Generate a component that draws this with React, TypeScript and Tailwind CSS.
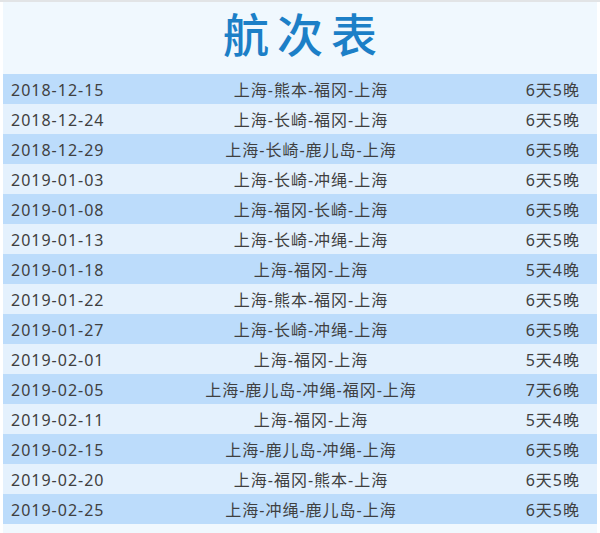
import React from "react";

const rows: [string, string, string][] = [
  ["2018-12-15", "上海-熊本-福冈-上海", "6天5晚"],
  ["2018-12-24", "上海-长崎-福冈-上海", "6天5晚"],
  ["2018-12-29", "上海-长崎-鹿儿岛-上海", "6天5晚"],
  ["2019-01-03", "上海-长崎-冲绳-上海", "6天5晚"],
  ["2019-01-08", "上海-福冈-长崎-上海", "6天5晚"],
  ["2019-01-13", "上海-长崎-冲绳-上海", "6天5晚"],
  ["2019-01-18", "上海-福冈-上海", "5天4晚"],
  ["2019-01-22", "上海-熊本-福冈-上海", "6天5晚"],
  ["2019-01-27", "上海-长崎-冲绳-上海", "6天5晚"],
  ["2019-02-01", "上海-福冈-上海", "5天4晚"],
  ["2019-02-05", "上海-鹿儿岛-冲绳-福冈-上海", "7天6晚"],
  ["2019-02-11", "上海-福冈-上海", "5天4晚"],
  ["2019-02-15", "上海-鹿儿岛-冲绳-上海", "6天5晚"],
  ["2019-02-20", "上海-福冈-熊本-上海", "6天5晚"],
  ["2019-02-25", "上海-冲绳-鹿儿岛-上海", "6天5晚"],
];

export default function App() {
  return (
    <div
      className="w-[600px] h-[533px] bg-white overflow-hidden"
      style={{ fontFamily: '"Noto Sans", "Noto Sans CJK SC", sans-serif' }}
    >
      <div className="h-[2px] bg-[#e2e4e6]" />
      <div className="ml-[3px] mr-[3px] h-[531px] bg-[#f0f8fe] flex flex-col">
        <div className="h-[72px] flex flex-col items-center">
          <div
            className="text-[46px] leading-[60px] text-[#1c7fc7] font-medium whitespace-nowrap px-[10px]"
            style={{ fontFamily: '"Noto Sans CJK SC", sans-serif', letterSpacing: "8px", textIndent: "8px" }}
          >
            航次表
          </div>
        </div>
        {rows.map(([d, r, t], i) => (
          <div
            key={d}
            className={`h-[30px] grid grid-cols-[168px_280px_1fr] items-center text-[16px] tracking-[1px] text-[#404040] pt-[2px] ${
              i % 2 === 0 ? "bg-[#bcdcfb]" : "bg-[#e4f1fd]"
            }`}
          >
            <div className="pl-[8px] whitespace-nowrap">{d}</div>
            <div className="text-center whitespace-nowrap">{r}</div>
            <div className="text-right pr-[17px] whitespace-nowrap">{t}</div>
          </div>
        ))}
      </div>
    </div>
  );
}
